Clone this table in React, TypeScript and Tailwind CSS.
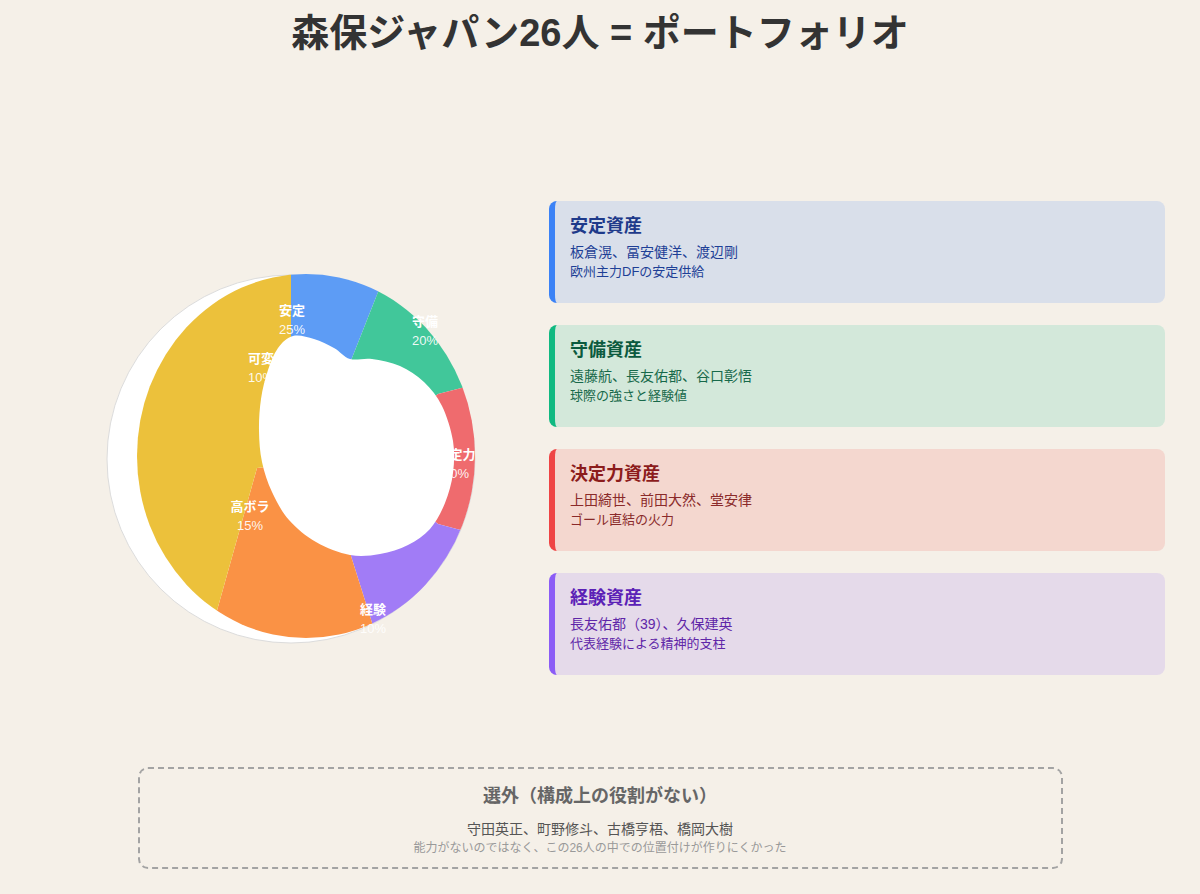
import React from "react";

const FONT = '"Liberation Sans", "Noto Sans CJK JP", sans-serif';

type Pt = [number, number];

// closed catmull-rom curve through the given points
const smoothPath = (pts: Pt[]) => {
  const n = pts.length;
  let d = `M ${pts[0][0]} ${pts[0][1]}`;
  for (let i = 0; i < n; i++) {
    const p0 = pts[(i - 1 + n) % n];
    const p1 = pts[i];
    const p2 = pts[(i + 1) % n];
    const p3 = pts[(i + 2) % n];
    const c1x = p1[0] + (p2[0] - p0[0]) / 6;
    const c1y = p1[1] + (p2[1] - p0[1]) / 6;
    const c2x = p2[0] - (p3[0] - p1[0]) / 6;
    const c2y = p2[1] - (p3[1] - p1[1]) / 6;
    d += ` C ${c1x.toFixed(1)} ${c1y.toFixed(1)}, ${c2x.toFixed(1)} ${c2y.toFixed(1)}, ${p2[0]} ${p2[1]}`;
  }
  return d + " Z";
};

const poly = (pts: Pt[]) => pts.map((p) => p.join(",")).join(" ");

const C: Pt = [355, 455];

const sectors = [
  { fill: "#5d9cf5", pts: [C, [291, 340], [291, 200], [414, 200], [350, 362]] as Pt[] },
  { fill: "#41c79a", pts: [C, [350, 362], [414, 200], [560, 200], [560, 362], [438, 393]] as Pt[] },
  { fill: "#ef6b6e", pts: [C, [438, 393], [560, 362], [560, 556], [438, 523]] as Pt[] },
  { fill: "#a17cf6", pts: [C, [438, 523], [560, 556], [560, 720], [403, 720], [351, 555]] as Pt[] },
  { fill: "#fa9245", pts: [C, [351, 555], [403, 720], [186, 720], [257, 467]] as Pt[] },
  { fill: "#ecc13b", pts: [C, [257, 467], [186, 720], [50, 720], [50, 200], [291, 200], [291, 340]] as Pt[] },
];

const labels = [
  { name: "安定", pct: "25%", x: 292, y: 309 },
  { name: "守備", pct: "20%", x: 425, y: 320 },
  { name: "決定力", pct: "20%", x: 456, y: 453 },
  { name: "経験", pct: "10%", x: 373, y: 608 },
  { name: "高ボラ", pct: "15%", x: 250, y: 505 },
  { name: "可変", pct: "10%", x: 261, y: 357 },
];

const blob: Pt[] = [
  [293, 335], [314, 338], [334, 347], [350, 358], [372, 358], [400, 365], [424, 381], [442, 405],
  [453, 440], [453, 472], [445, 502], [430, 528], [408, 544], [380, 553], [350, 554],
  [316, 541], [289, 519], [272, 491], [262, 461], [259, 430], [261, 398], [268, 369], [278, 347],
];

const PortfolioPie = () => (
  <svg width="380" height="385" viewBox="101 265 380 385" className="block">
    <defs>
      <clipPath id="pie-clip">
        <ellipse cx="306" cy="455" rx="169" ry="182" />
      </clipPath>
    </defs>
    <circle cx="291" cy="458" r="184" fill="#ffffff" stroke="#dcdcdc" strokeWidth="1" />
    <g clipPath="url(#pie-clip)">
      {sectors.map((s, i) => (
        <polygon key={i} points={poly(s.pts)} fill={s.fill} />
      ))}
    </g>
    {labels.map((l) => (
      <g key={l.name} fill="#ffffff" textAnchor="middle" fontFamily={FONT}>
        <text x={l.x} y={l.y + 5} fontSize="13" fontWeight="700">
          {l.name}
        </text>
        <text x={l.x} y={l.y + 24} fontSize="13" fillOpacity="0.92">
          {l.pct}
        </text>
      </g>
    ))}
    <path d={smoothPath(blob)} fill="#ffffff" />
  </svg>
);

const cards = [
  {
    title: "安定資産",
    names: "板倉滉、冨安健洋、渡辺剛",
    note: "欧州主力DFの安定供給",
    box: "bg-[#d9dfea] border-[#3b82f6]",
    head: "text-[#1e3a8a]",
    body: "text-[#1e3f96]",
  },
  {
    title: "守備資産",
    names: "遠藤航、長友佑都、谷口彰悟",
    note: "球際の強さと経験値",
    box: "bg-[#d3e8da] border-[#10b981]",
    head: "text-[#0b5a3e]",
    body: "text-[#17694a]",
  },
  {
    title: "決定力資産",
    names: "上田綺世、前田大然、堂安律",
    note: "ゴール直結の火力",
    box: "bg-[#f4d7cf] border-[#ef4444]",
    head: "text-[#8c1c1c]",
    body: "text-[#8a2a2a]",
  },
  {
    title: "経験資産",
    names: "長友佑都（39）、久保建英",
    note: "代表経験による精神的支柱",
    box: "bg-[#e5daea] border-[#8b5cf6]",
    head: "text-[#5b21b6]",
    body: "text-[#5f26a8]",
  },
];

export default function App() {
  return (
    <div className="min-h-[894px] w-full bg-[#f5f0e8]" style={{ fontFamily: FONT }}>
      <h1 className="pt-[11px] text-center text-[38px] font-bold leading-[44px] text-[#333333]">
        森保ジャパン26人 = ポートフォリオ
      </h1>

      <div className="mt-[146px] flex items-center px-[35px]">
        <div className="flex w-[512px] shrink-0 justify-center pt-[40px]">
          <PortfolioPie />
        </div>
        <div className="ml-[2px] flex flex-1 flex-col gap-[22px]">
          {cards.map((c) => (
            <div
              key={c.title}
              className={`h-[102px] rounded-[8px] border-l-[6px] pl-[15px] pt-[13px] ${c.box}`}
            >
              <div className={`text-[18px] font-bold leading-[25px] ${c.head}`}>{c.title}</div>
              <div className={`mt-[3px] text-[14px] leading-[20px] ${c.body}`}>{c.names}</div>
              <div className={`text-[13px] leading-[20px] ${c.body}`}>{c.note}</div>
            </div>
          ))}
        </div>
      </div>

      <div className="mx-auto mt-[92px] h-[102px] w-[925px] rounded-[10px] border-2 border-dashed border-[#a3a3a3] pt-[15px] text-center">
        <div className="text-[18px] font-bold leading-[24px] text-[#666666]">選外（構成上の役割がない）</div>
        <div className="mt-[11px] text-[14px] leading-[20px] text-[#555555]">
          守田英正、町野修斗、古橋亨梧、橋岡大樹
        </div>
        <div className="text-[12px] leading-[18px] text-[#999999]">
          能力がないのではなく、この26人の中での位置付けが作りにくかった
        </div>
      </div>
    </div>
  );
}
